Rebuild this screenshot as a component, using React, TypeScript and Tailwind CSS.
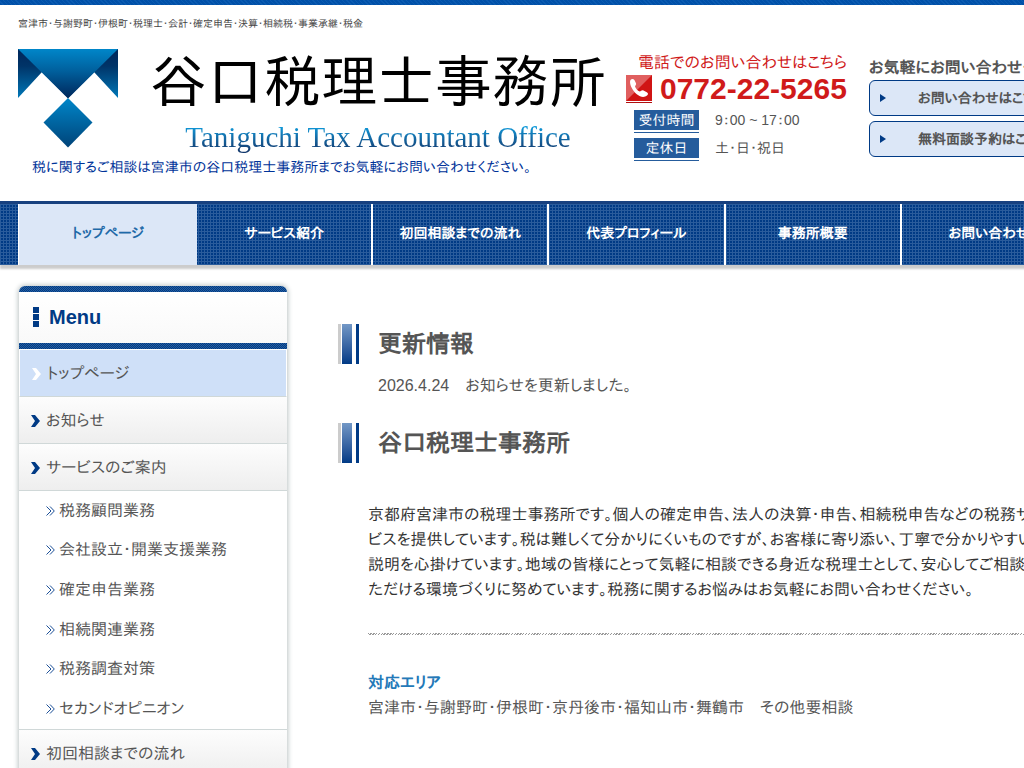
type NavItem = {
  label: string
  active?: boolean
}

type MenuItem = NavItem & { children?: string[] }

const navigation: NavItem[] = [
  { label: 'トップページ', active: true },
  { label: 'サービス紹介' },
  { label: '初回相談までの流れ' },
  { label: '代表プロフィール' },
  { label: '事務所概要' },
  { label: 'お問い合わせ' },
]

const menu: MenuItem[] = [
  { label: 'トップページ', active: true },
  { label: 'お知らせ' },
  {
    label: 'サービスのご案内',
    children: [
      '税務顧問業務',
      '会社設立・開業支援業務',
      '確定申告業務',
      '相続関連業務',
      '税務調査対策',
      'セカンドオピニオン',
    ],
  },
  { label: '初回相談までの流れ' },
  { label: '事務所概要' },
]

const hours = [
  { label: '受付時間', value: '9：00 ~ 17：00' },
  { label: '定休日', value: '土・日・祝日' },
]

const contacts = ['お問い合わせはこちら', '無料面談予約はこちら']

const LogoMark = () => (
  <svg width="100" height="99" viewBox="0 0 100 99" className="shrink-0" aria-hidden="true">
    <defs>
      <linearGradient id="mark-down" x1="0" y1="0" x2="0" y2="1">
        <stop offset="0" stopColor="#0086c9" />
        <stop offset="0.45" stopColor="#005f9c" />
        <stop offset="1" stopColor="#00265a" />
      </linearGradient>
      <linearGradient id="mark-side" x1="0" y1="0" x2="0" y2="1">
        <stop offset="0" stopColor="#00265a" />
        <stop offset="0.35" stopColor="#003468" />
        <stop offset="1" stopColor="#0078b8" />
      </linearGradient>
      <linearGradient id="mark-gem" x1="0" y1="0" x2="0" y2="1">
        <stop offset="0" stopColor="#0086c9" />
        <stop offset="1" stopColor="#004378" />
      </linearGradient>
    </defs>
    <path d="M0 0V49L24 23L50 49L76 23L100 49V0Z" fill="url(#mark-side)" />
    <path d="M0 0H100L50 49.500Z" fill="url(#mark-down)" />
    <path d="M50 49L74.500 73.500L50 98.500L25.500 73.500Z" fill="url(#mark-gem)" />
  </svg>
)

const PhoneIcon = () => (
  <svg width="26" height="28" viewBox="0 0 26 28" className="shrink-0" aria-hidden="true">
    <path d="M0 0H26V26H0Z" fill="#d01414" />
    <path d="M0 0H26L0 26Z" fill="#e05f5f" />
    <path d="M0 26H26V27H0Z" fill="#fff" />
    <path d="M0 27H26V28H0Z" fill="#b01010" />
    <path
      d="M4.500 5C5.500 3.600 7.600 3.800 8.400 5L10 8.300C10.500 9.600 9.300 10.500 9 11.500C9.800 13.800 11.500 15.600 13.800 16.500C14.800 16.500 15.500 15 17 15.300L20.800 17.200C22.300 18 22.300 19.300 21.300 20.300C19 22.300 16.500 22.500 14 21.200C9.500 19 6 14.500 4.500 10C4 8 3.800 6.200 4.500 5Z"
      fill="#fff"
    />
  </svg>
)

const Chevron = ({ className }: { className: string }) => (
  <svg width="9" height="12" viewBox="0 0 9 12" className={`shrink-0 ${className}`} aria-hidden="true">
    <path d="M0 0H4L9 6L4 12H0L4 6Z" fill="currentColor" />
  </svg>
)

const DoubleChevron = () => (
  <svg width="9" height="10" viewBox="0 0 9 10" className="shrink-0" aria-hidden="true">
    <path d="M.5 .5L5 5L.5 9.500M4 .5L8.300 5L4 9.500" fill="none" stroke="#1c4f97" strokeWidth="1" />
  </svg>
)

const Band = () => (
  <div className="h-1.5 bg-[repeating-conic-gradient(#003a85_0_25%,#28609f_0_50%)] bg-size-[2px_2px]" />
)

const SectionHeading = ({ children }: { children: string }) => (
  <h2 className="flex h-10 items-center text-2xl leading-10 font-bold text-[#555]">
    <span className="mr-[19px] flex h-10 shrink-0" aria-hidden="true">
      <span className="mr-px w-[3px] bg-[#ccc]" />
      <span className="mr-1 w-2.5 bg-linear-to-b from-[#7398c6] to-[#003a85]" />
      <span className="w-[3px] bg-[#003a85]" />
    </span>
    {children}
  </h2>
)

const Header = () => (
  <header className="h-[196px] pt-[11px] pl-[18px]">
    <h1 className="text-[10px] leading-4 text-[#444]">
      宮津市・与謝野町・伊根町・税理士・会計・確定申告・決算・相続税・事業承継・税金
    </h1>
    <div className="mt-[17px] flex">
      <div className="w-[608px] shrink-0">
        <a href="#top" className="flex">
          <LogoMark />
          <span className="ml-8 flex flex-col items-center">
            <span className="text-[57px] leading-[66px] text-black">谷口税理士事務所</span>
            <span className="mt-1 bg-linear-to-b from-[#0c9bdc] from-20% to-[#12386c] to-90% bg-clip-text font-['Liberation_Serif',serif] text-[29px] leading-9 text-transparent">
              Taniguchi Tax Accountant Office
            </span>
          </span>
        </a>
        <p className="pl-3.5 text-sm leading-6 text-[#003399]">
          税に関するご相談は宮津市の谷口税理士事務所までお気軽にお問い合わせください。
        </p>
      </div>

      <div className="w-[243px] shrink-0">
        <p className="mt-1 pl-3 text-base leading-5 text-[#d01a1a]">電話でのお問い合わせはこちら</p>
        <p className="flex items-center gap-2 text-[30px] leading-8 font-bold text-[#d01a1a]">
          <PhoneIcon />
          0772-22-5265
        </p>
        <dl className="mt-[5px] space-y-[5px] pl-2 text-sm">
          {hours.map((row) => (
            <div key={row.label} className="flex items-start gap-4">
              <dt className="w-[65px] border-b border-[#255c9c] pb-0.5">
                <span className="block bg-[#255c9c] text-center leading-5 text-white">{row.label}</span>
              </dt>
              <dd className="leading-5 text-[#555]">{row.value}</dd>
            </div>
          ))}
        </dl>
      </div>

      <div className="mt-[9px] w-[209px] shrink-0 font-bold text-[#555]">
        <p className="mb-0.5 text-base leading-5 whitespace-nowrap">お気軽にお問い合わせください</p>
        {contacts.map((label) => (
          <a
            key={label}
            href="#contact"
            className="mb-[5px] flex h-9 items-center rounded-md border border-[#003a85] bg-[#dce7f7] pl-2.5 text-sm whitespace-nowrap"
          >
            <svg width="6" height="8" viewBox="0 0 6 8" className="mr-8 shrink-0" aria-hidden="true">
              <path d="M0 0L6 4L0 8Z" fill="#003a85" />
            </svg>
            {label}
          </a>
        ))}
      </div>
    </div>
  </header>
)

const GlobalNav = () => (
  <nav className="border-t-3 border-[#18417f] bg-[#003a85] bg-[linear-gradient(#2a5c9c_1px,transparent_1px),linear-gradient(90deg,#2a5c9c_1px,transparent_1px)] bg-size-[3px_3px] px-[18px] shadow-[0_4px_2px_#ccc]">
    <ul className="grid grid-cols-[179px_repeat(5,1fr)]">
      {navigation.map((item) => (
        <li key={item.label} className="nth-[n+2]:border-r-2 nth-[n+2]:border-white">
          <a
            href="#page"
            className={`flex h-[61px] items-center justify-center pb-1 text-sm font-bold ${
              item.active ? 'border-l border-white bg-[#dce7f7] text-[#1f6aa8]' : 'text-white'
            }`}
          >
            {item.label}
          </a>
        </li>
      ))}
    </ul>
  </nav>
)

const Sidebar = () => (
  <aside className="w-[268px] shrink-0 overflow-hidden rounded-t-md bg-white shadow-[0_0_5px_1px_#bcc4c4]">
    <Band />
    <h2 className="flex h-[51px] items-center gap-2.5 bg-linear-to-b from-white to-[#f9f9f9] pb-px pl-3.5 text-xl font-bold text-[#003a85]">
      <span className="flex flex-col gap-px" aria-hidden="true">
        <span className="h-1.5 w-1.5 bg-[#003a85]" />
        <span className="h-1.5 w-1.5 bg-[#003a85]" />
        <span className="h-1.5 w-1.5 bg-[#003a85]" />
      </span>
      Menu
    </h2>
    <Band />
    <ul className="text-base text-[#555]">
      {menu.map((item) => (
        <li key={item.label}>
          <a
            href="#page"
            className={`flex items-center gap-1.5 border-b border-[#d0d8d8] pt-0.5 pl-3 ${
              item.active
                ? 'h-12 border-x border-t border-x-white border-t-white bg-[#cfe0f8]'
                : 'h-[47px] bg-linear-to-b from-[#fdfdfd] to-[#eee]'
            }`}
          >
            <Chevron className={item.active ? 'text-white' : 'text-[#003a85]'} />
            {item.label}
          </a>
          {item.children && (
            <ul className="grid h-[239px] grid-rows-6 border-b border-[#d0d8d8]">
              {item.children.map((child) => (
                <li key={child}>
                  <a href="#service" className="flex h-full items-center gap-1 pl-[27px]">
                    <DoubleChevron />
                    {child}
                  </a>
                </li>
              ))}
            </ul>
          )}
        </li>
      ))}
    </ul>
  </aside>
)

export default function App() {
  return (
    <div
      lang="ja"
      className="h-screen overflow-hidden bg-white font-['Liberation_Sans','MS_PGothic','IPAPGothic','VL_PGothic','Noto_Sans_CJK_JP',sans-serif] [font-feature-settings:'palt']"
    >
      <div className="min-w-[1096px]">
        <div className="h-[5px] bg-[repeating-linear-gradient(45deg,#0050a8_0_2px,#0a5ab0_2px_3px)]" />
        <Header />
        <GlobalNav />
        <div className="flex gap-[51px] pt-[21px] pl-[19px]">
          <Sidebar />
          <main className="min-w-0 flex-1 pt-[38px] text-[#555]">
            <SectionHeading>更新情報</SectionHeading>
            <p className="mt-2 mb-[23px] pl-10 text-base leading-7">2026.4.24　お知らせを更新しました。</p>
            <SectionHeading>谷口税理士事務所</SectionHeading>
            <div className="pr-[18px] pl-[30px]">
              <p className="mt-[39px] max-w-[680px] text-base leading-[25px] text-[#333]">
                京都府宮津市の税理士事務所です。個人の確定申告、法人の決算・申告、相続税申告などの税務サービスを提供しています。税は難しくて分かりにくいものですが、お客様に寄り添い、丁寧で分かりやすい説明を心掛けています。地域の皆様にとって気軽に相談できる身近な税理士として、安心してご相談いただける環境づくりに努めています。税務に関するお悩みはお気軽にお問い合わせください。
              </p>
              <div className="mt-[31px] h-0.5 bg-[repeating-linear-gradient(135deg,#999_0_1px,#fff_1px_2px)]" />
              <h3 className="mt-[35px] text-base leading-[25px] font-bold text-[#2479b8]">対応エリア</h3>
              <p className="text-base leading-[26px]">
                宮津市・与謝野町・伊根町・京丹後市・福知山市・舞鶴市　その他要相談
              </p>
            </div>
          </main>
        </div>
      </div>
    </div>
  )
}
